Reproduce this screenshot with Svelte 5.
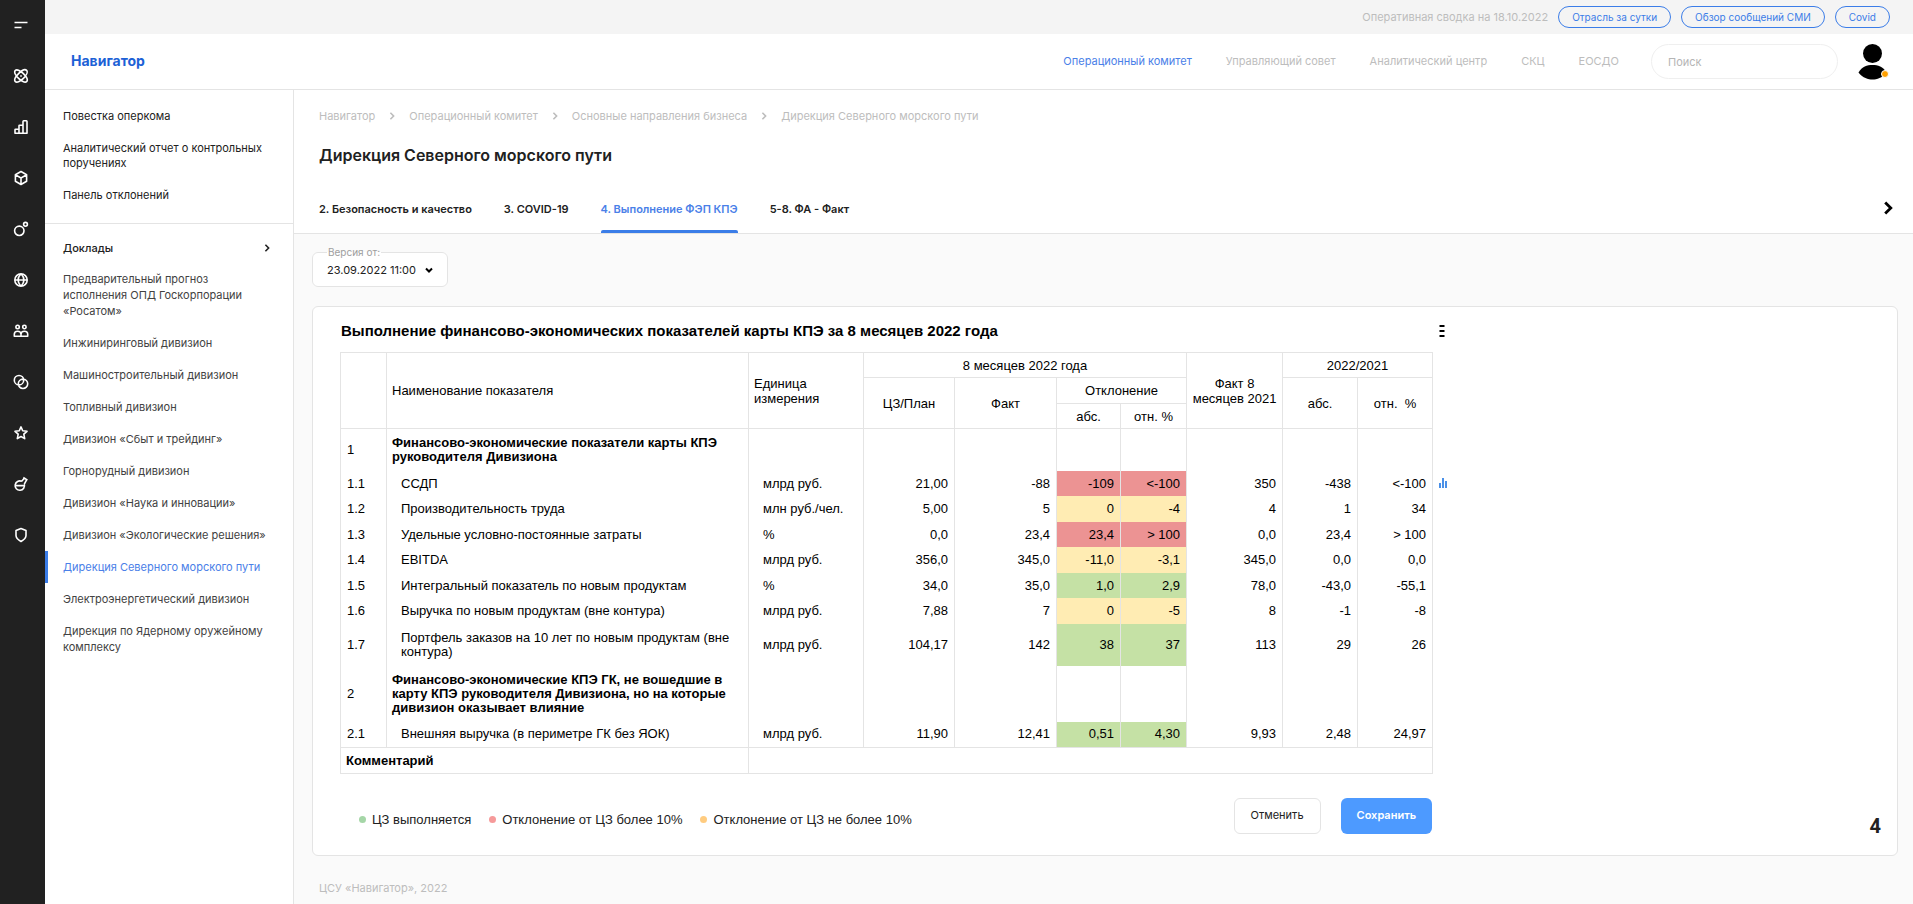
<script lang="ts">
	type Tone = 'good' | 'bad' | 'warn';
	type Row = {
		no: string;
		name: string;
		unit?: string;
		values?: string[];
		tone?: Tone;
		chart?: boolean;
	};

	const reports = [
		'Предварительный прогноз исполнения ОПД Госкорпорации «Росатом»',
		'Инжиниринговый дивизион',
		'Машиностроительный дивизион',
		'Топливный дивизион',
		'Дивизион «Сбыт и трейдинг»',
		'Горнорудный дивизион',
		'Дивизион «Наука и инновации»',
		'Дивизион «Экологические решения»',
		'Дирекция Северного морского пути',
		'Электроэнергетический дивизион',
		'Дирекция по Ядерному оружейному комплексу'
	];
	const pages = ['Повестка оперкома', 'Аналитический отчет о контрольных поручениях', 'Панель отклонений'];
	const sections = ['Операционный комитет', 'Управляющий совет', 'Аналитический центр', 'СКЦ', 'ЕОСДО'];
	const crumbs = ['Навигатор', 'Операционный комитет', 'Основные направления бизнеса', 'Дирекция Северного морского пути'];
	const tabs = ['2. Безопасность и качество', '3. COVID-19', '4. Выполнение ФЭП КПЭ', '5-8. ФА - Факт'];
	const digests = ['Отрасль за сутки', 'Обзор сообщений СМИ', 'Covid'];

	const rows: Row[] = [
		{ no: '1', name: 'Финансово-экономические показатели карты КПЭ руководителя Дивизиона' },
		{ no: '1.1', name: 'ССДП', unit: 'млрд руб.', values: ['21,00', '-88', '-109', '<-100', '350', '-438', '<-100'], tone: 'bad', chart: true },
		{ no: '1.2', name: 'Производительность труда', unit: 'млн руб./чел.', values: ['5,00', '5', '0', '-4', '4', '1', '34'], tone: 'warn' },
		{ no: '1.3', name: 'Удельные условно-постоянные затраты', unit: '%', values: ['0,0', '23,4', '23,4', '> 100', '0,0', '23,4', '> 100'], tone: 'bad' },
		{ no: '1.4', name: 'EBITDA', unit: 'млрд руб.', values: ['356,0', '345,0', '-11,0', '-3,1', '345,0', '0,0', '0,0'], tone: 'warn' },
		{ no: '1.5', name: 'Интегральный показатель по новым продуктам', unit: '%', values: ['34,0', '35,0', '1,0', '2,9', '78,0', '-43,0', '-55,1'], tone: 'good' },
		{ no: '1.6', name: 'Выручка по новым продуктам (вне контура)', unit: 'млрд руб.', values: ['7,88', '7', '0', '-5', '8', '-1', '-8'], tone: 'warn' },
		{ no: '1.7', name: 'Портфель заказов на 10 лет по новым продуктам (вне контура)', unit: 'млрд руб.', values: ['104,17', '142', '38', '37', '113', '29', '26'], tone: 'good' },
		{ no: '2', name: 'Финансово-экономические КПЭ ГК, не вошедшие в карту КПЭ руководителя Дивизиона, но на которые дивизион оказывает влияние' },
		{ no: '2.1', name: 'Внешняя выручка (в периметре ГК без ЯОК)', unit: 'млрд руб.', values: ['11,90', '12,41', '0,51', '4,30', '9,93', '2,48', '24,97'], tone: 'good' }
	];

	const legend: { tone: Tone; text: string }[] = [
		{ tone: 'good', text: 'ЦЗ выполняется' },
		{ tone: 'bad', text: 'Отклонение от ЦЗ более 10%' },
		{ tone: 'warn', text: 'Отклонение от ЦЗ не более 10%' }
	];

	const icons = [
		{ name: 'Меню', d: 'M1.5 5.5h13M1.5 10.5h7' },
		{
			name: 'Атом',
			d: 'M2.4 2.4C4 .8 7.800 3 10.400 5.600S15.200 12 13.600 13.600 8.200 13 5.600 10.400.8 4 2.400 2.400ZM13.600 2.400C12 .8 8.200 3 5.600 5.600S.8 12 2.400 13.600 7.800 13 10.400 10.400 15.200 4 13.600 2.400ZM8 7.200v1.600'
		},
		{ name: 'Показатели', d: 'M2 14.200v-3.400q0-.6.6-.6H6v4ZM6 14.200V6.800q0-.6.6-.6H10v8ZM10 14.200V2.400q0-.7.7-.7h2.600q.7 0 .7.7v11.800ZM2 14.200h12' },
		{ name: 'Продукты', d: 'M8 1.500l5.600 3.200v6.600L8 14.500l-5.600-3.200V4.700ZM2.600 4.900L8 8l5.400-3.100M8 8v6.300' },
		{ name: 'Процессы', d: 'M11 9.800a4.700 4.700 0 1 1-9.400 0 4.700 4.700 0 0 1 9.400 0ZM14.400 3.300a1.900 1.900 0 1 1-3.800 0 1.900 1.900 0 0 1 3.800 0Z' },
		{ name: 'География', d: 'M14.200 8A6.200 6.200 0 1 1 1.800 8a6.200 6.200 0 0 1 12.400 0ZM2 8h12M8 1.800c-3.800 4-3.800 8.400 0 12.400M8 1.800c3.800 4 3.800 8.400 0 12.400' },
		{
			name: 'Персонал',
			d: 'M6.300 4a1.700 1.700 0 1 1-3.400 0 1.700 1.700 0 0 1 3.400 0ZM13.100 4a1.700 1.700 0 1 1-3.400 0 1.700 1.700 0 0 1 3.400 0ZM1.300 13.300v-2q0-3 3.300-3T8 11.300v2ZM8 13.300v-2q0-3 3.400-3t3.300 3v2Z'
		},
		{ name: 'Связи', d: 'M10.700 6.200a4.700 4.700 0 1 1-9.400 0 4.700 4.700 0 0 1 9.400 0ZM14.700 9.800a4.700 4.700 0 1 1-9.400 0 4.700 4.700 0 0 1 9.400 0Z' },
		{ name: 'Избранное', d: 'M8 1.900l1.700 3.900 4.300.5-3.200 2.900.9 4.400L8 11.500l-3.700 2.100.9-4.400L2 6.300l4.300-.5Z' },
		{ name: 'Исследования', d: 'M8.700 5.300A4.700 4.700 0 1 0 11.300 8.200M8.700 5.300l2.600-3M11.300 8.200l2.300-4.400M10.300 1.500l4.200 2.700M2.200 9.600h9' },
		{ name: 'Безопасность', d: 'M8 1.500l5 2v5c0 2.800-2.400 4.500-5 6-2.600-1.500-5-3.200-5-6v-5Z' }
	];

	let activeSection = $state(0);
	let activeReport = $state(8);
	let activeTab = $state(2);
	let search = $state('');
</script>

{#snippet chevron(size: number, width: number)}
	<svg width={size} height={size} viewBox="0 0 10 10" fill="none" stroke="currentColor" stroke-width={width} aria-hidden="true">
		<path d="M3 1l4 4-4 4" />
	</svg>
{/snippet}

<div class="app">
	<nav class="rail" aria-label="Разделы">
		{#each icons as icon}
			<button aria-label={icon.name}>
				<svg width="16" height="16" viewBox="0 0 16 16"><path d={icon.d} /></svg>
			</button>
		{/each}
	</nav>

	<div class="page">
		<div class="digest">
			<span>Оперативная сводка на 18.10.2022</span>
			{#each digests as digest}
				<button class="pill">{digest}</button>
			{/each}
		</div>

		<header>
			<a class="brand" href="#home">Навигатор</a>
			<nav class="sections">
				{#each sections as section, i}
					<a href="#section-{i}" class:active={i === activeSection} onclick={() => (activeSection = i)}>{section}</a>
				{/each}
			</nav>
			<input type="search" placeholder="Поиск" aria-label="Поиск" bind:value={search} />
			<button class="avatar" aria-label="Профиль">
				<svg width="30" height="36" viewBox="0 0 30 36">
					<circle cx="14.500" cy="9.500" r="9.500" />
					<path d="M.5 28.500C4 22.500 9 21 14.500 21s10.500 1.500 14 7.500C24 34 19 35.500 14.500 35.500S5 34 .5 28.500Z" />
					<circle class="status" cx="27" cy="30" r="3.500" />
				</svg>
			</button>
		</header>

		<div class="body">
			<aside>
				<ul class="pages">
					{#each pages as page, i}
						<li><a href="#page-{i}">{page}</a></li>
					{/each}
				</ul>
				<button class="group">Доклады {@render chevron(8, 2)}</button>
				<ul class="reports">
					{#each reports as report, i}
						<li class:active={i === activeReport}>
							<a href="#report-{i}" onclick={() => (activeReport = i)}>{report}</a>
						</li>
					{/each}
				</ul>
			</aside>

			<main>
				<div class="top">
					<nav class="crumbs" aria-label="Навигация">
						{#each crumbs as crumb, i}
							{#if i > 0}{@render chevron(8, 2)}{/if}
							<a href="#crumb-{i}">{crumb}</a>
						{/each}
					</nav>
					<h1>Дирекция Северного морского пути</h1>
					<div class="tabs">
						{#each tabs as tab, i}
							<button class="tab" class:active={i === activeTab} onclick={() => (activeTab = i)}>{tab}</button>
						{/each}
						<button class="next" aria-label="Следующая вкладка" onclick={() => (activeTab = (activeTab + 1) % tabs.length)}>
							{@render chevron(14, 2)}
						</button>
					</div>
				</div>

				<div class="content">
					<fieldset class="version">
						<legend><label for="version">Версия от:</label></legend>
						<select id="version">
							<option>23.09.2022 11:00</option>
						</select>
						<svg width="8" height="8" viewBox="0 0 8 8" aria-hidden="true"><path d="M1 2.500l3 3 3-3" /></svg>
					</fieldset>

					<section class="card">
						<div class="report">
							<div class="title">
								<h2>Выполнение финансово-экономических показателей карты КПЭ за 8 месяцев 2022 года</h2>
								<button aria-label="Действия">
									<svg width="6" height="14" viewBox="0 0 6 14"><path d="M.5 1h5v2h-5zM.5 6h5v2h-5zM.5 11h5v2h-5z" /></svg>
								</button>
							</div>

							<table>
								<colgroup>
									<col class="c-no" /><col class="c-name" /><col class="c-unit" /><col class="c-plan" /><col class="c-fact" />
									<col class="c-abs" /><col class="c-rel" /><col class="c-prev" /><col class="c-diff" /><col class="c-diff" /><col class="c-tool" />
								</colgroup>
								<thead>
									<tr>
										<th rowspan="3"></th>
										<th rowspan="3" class="left">Наименование показателя</th>
										<th rowspan="3" class="left">Единица измерения</th>
										<th colspan="4">8 месяцев 2022 года</th>
										<th rowspan="3">Факт 8 месяцев 2021</th>
										<th colspan="2">2022/2021</th>
										<td class="tool"></td>
									</tr>
									<tr>
										<th rowspan="2">ЦЗ/План</th>
										<th rowspan="2">Факт</th>
										<th colspan="2" class="tall">Отклонение</th>
										<th rowspan="2">абс.</th>
										<th rowspan="2">отн. &nbsp;%</th>
										<td class="tool"></td>
									</tr>
									<tr>
										<th>абс.</th>
										<th>отн. %</th>
										<td class="tool"></td>
									</tr>
								</thead>
								<tbody>
									{#each rows as row}
										<tr class:total={!row.values}>
											<td>{row.no}</td>
											<td class="name">{row.name}</td>
											<td class="unit">{row.unit ?? ''}</td>
											{#each row.values ?? Array(7).fill('') as value, i}
												<td class="num {i === 2 || i === 3 ? (row.tone ?? '') : ''}">{value}</td>
											{/each}
											<td class="tool">
												{#if row.chart}
													<button aria-label="График: {row.name}">
														<svg width="8" height="10" viewBox="0 0 8 10"><path d="M0 5h2v5H0zM3 0h2v10H3zM6 3h2v7H6z" /></svg>
													</button>
												{/if}
											</td>
										</tr>
									{/each}
								</tbody>
								<tfoot>
									<tr>
										<th colspan="2" class="left tall">Комментарий</th>
										<td colspan="8"></td>
										<td class="tool"></td>
									</tr>
								</tfoot>
							</table>

							<div class="bottom">
								<ul class="legend">
									{#each legend as item}
										<li><i class={item.tone}></i>{item.text}</li>
									{/each}
								</ul>
								<button class="cancel">Отменить</button>
								<button class="save">Сохранить</button>
							</div>
						</div>
						<span class="page-no">4</span>
					</section>

					<footer>ЦСУ «Навигатор», 2022</footer>
				</div>
			</main>
		</div>
	</div>
</div>

<style>
	:global(body) {
		margin: 0;
	}

	.app {
		display: flex;
		min-height: 100vh;
		font: 12px/16px Inter, sans-serif;
		color: #212121;
		background: #fff;
	}

	a {
		color: inherit;
		text-decoration: none;
	}

	button {
		font: inherit;
		color: inherit;
		padding: 0;
		border: none;
		background: none;
		cursor: pointer;
	}

	ul {
		list-style: none;
		margin: 0;
		padding: 0;
	}

	svg {
		display: block;
	}

	.rail {
		flex: none;
		width: 45px;
		box-sizing: border-box;
		padding: 17px 0 0 13px;
		display: flex;
		flex-direction: column;
		align-items: flex-start;
		gap: 35px;
		background: #212121;
	}

	.rail path {
		fill: none;
		stroke: #fff;
		stroke-width: 1.6;
		stroke-linejoin: round;
	}

	.page {
		flex: 1;
		min-width: 0;
		display: flex;
		flex-direction: column;
	}

	.digest {
		display: flex;
		justify-content: flex-end;
		align-items: center;
		gap: 10px;
		height: 34px;
		padding-right: 23px;
		background: #f4f4f4;
		color: #bdbdbd;
		font-size: 11px;
	}

	.pill {
		height: 22px;
		padding: 0 13px;
		border: 1px solid #3b7de8;
		border-radius: 11px;
		color: #3b7de8;
		font-size: 10px;
	}

	header {
		display: flex;
		align-items: center;
		height: 55px;
		padding: 0 25px 0 26px;
		border-bottom: 1px solid #e4e4e4;
	}

	.brand {
		margin-right: auto;
		padding-bottom: 2px;
		font-size: 14px;
		font-weight: 700;
		color: #1c61d6;
	}

	.sections {
		display: flex;
		gap: 34px;
		margin-right: 32px;
		padding-bottom: 2px;
		color: #bdbdbd;
		font-size: 11px;
	}

	.sections .active {
		color: #4a80e8;
	}

	input {
		width: 187px;
		height: 35px;
		box-sizing: border-box;
		padding: 0 16px;
		border: 1px solid #efefef;
		border-radius: 18px;
		font: 11px Inter, sans-serif;
		outline: none;
	}

	input::placeholder {
		color: #b5b5b5;
	}

	.avatar {
		margin-left: 20px;
	}

	.avatar svg {
		overflow: visible;
	}

	.status {
		fill: #ffa000;
		stroke: #fff;
	}

	.body {
		flex: 1;
		display: flex;
	}

	aside {
		flex: none;
		width: 249px;
		box-sizing: border-box;
		border-right: 1px solid #e4e4e4;
		font-size: 11px;
	}

	.pages {
		display: flex;
		flex-direction: column;
		gap: 17px;
		padding: 19px 18px 20px;
		line-height: 15px;
		border-bottom: 1px solid #e4e4e4;
	}

	.group {
		display: flex;
		justify-content: space-between;
		align-items: center;
		width: 100%;
		padding: 16px 22px 7px 18px;
		font-weight: 500;
	}

	.reports li {
		padding: 8px 18px 8px 15px;
		color: #424242;
		border-left: 3px solid transparent;
	}

	.reports .active {
		color: #4a80e8;
		border-left-color: #3b7de8;
	}

	main {
		flex: 1;
		min-width: 0;
		display: flex;
		flex-direction: column;
	}

	.top {
		padding: 18px 18px 0 25px;
		border-bottom: 1px solid #e4e4e4;
	}

	.crumbs {
		display: flex;
		align-items: center;
		gap: 13px;
		color: #bdbdbd;
		font-size: 11px;
	}

	h1 {
		margin: 19px 0 34px;
		font-size: 16px;
		line-height: 24px;
		font-weight: 600;
	}

	.tabs {
		display: flex;
		align-items: flex-start;
		gap: 32px;
		font-size: 11px;
		font-weight: 600;
	}

	.tab {
		position: relative;
		height: 32px;
		padding-bottom: 16px;
	}

	.tab.active {
		color: #4a80e8;
	}

	.tab.active::after {
		content: '';
		position: absolute;
		inset: auto 0 0;
		height: 3px;
		border-radius: 2px 2px 0 0;
		background: #3b7de8;
	}

	.next {
		margin-left: auto;
		color: #000;
	}

	.content {
		flex: 1;
		padding: 10px 15px 0 18px;
		background: #fafafa;
	}

	.version {
		display: flex;
		align-items: center;
		gap: 6px;
		width: fit-content;
		height: 43px;
		box-sizing: border-box;
		margin: 0 0 19px;
		padding: 0 14px 6px;
		border: 1px solid #e4e4e4;
		border-radius: 6px;
		background: #fff;
	}

	.version legend {
		padding: 0 1px;
		color: #9e9e9e;
		font-size: 10px;
		line-height: 16px;
	}

	.version select {
		appearance: none;
		width: 92px;
		padding: 0;
		border: none;
		background: none;
		color: #212121;
		font: 11px Inter, sans-serif;
	}

	.version path {
		fill: none;
		stroke: #000;
		stroke-width: 2;
	}

	.card {
		display: flex;
		justify-content: space-between;
		align-items: flex-end;
		padding: 14px 16px 21px 27px;
		background: #fff;
		border: 1px solid #e4e4e4;
		border-radius: 6px;
		color: #000;
		font-family: 'Liberation Sans', Arial, sans-serif;
	}

	.report {
		flex: 0 1 1115px;
	}

	.title {
		display: flex;
		justify-content: space-between;
		align-items: center;
		margin-bottom: 11px;
		padding: 0 10px 0 1px;
	}

	h2 {
		margin: 0;
		font-size: 15px;
		line-height: 20px;
		font-weight: 700;
	}

	table {
		width: 100%;
		table-layout: fixed;
		border-collapse: collapse;
		font-size: 13px;
		line-height: 15px;
	}

	.c-no { width: 46px; }
	.c-name { width: 362px; }
	.c-unit { width: 115px; }
	.c-plan { width: 91px; }
	.c-fact { width: 102px; }
	.c-abs { width: 64px; }
	.c-rel { width: 66px; }
	.c-prev { width: 96px; }
	.c-diff { width: 75px; }
	.c-tool { width: 22px; }

	th,
	td {
		height: 25px;
		box-sizing: border-box;
		padding: 0 5px;
		border: 1px solid #e4e4e4;
	}

	th {
		font-weight: 400;
	}

	.left {
		text-align: left;
	}

	.tall {
		height: 26px;
	}

	tbody {
		line-height: 14px;
	}

	tbody td {
		height: 26px;
		padding: 0 6px;
		border-width: 0 1px;
	}

	tbody tr:nth-child(even) td {
		height: 25px;
	}

	tbody .name {
		padding: 5px 14px;
	}

	/* rows whose name wraps */
	tbody tr:nth-child(8) .name {
		padding: 7px 14px;
	}

	tbody .unit {
		padding: 0 14px;
	}

	tbody .total .name {
		padding: 7px 16px 7px 5px;
		font-weight: 700;
	}

	.num {
		text-align: right;
	}

	tfoot .left {
		font-weight: 700;
	}

	table .tool {
		border: none;
		padding: 0 0 0 6px;
	}

	.tool path {
		fill: #4a90e8;
	}

	td.good { background: #c5e1a5; }
	td.bad { background: #ec9393; }
	td.warn { background: #ffecb3; }

	.bottom {
		display: flex;
		align-items: center;
		gap: 20px;
		margin-top: 24px;
		padding-right: 23px;
		font: 11px Inter, sans-serif;
	}

	.legend {
		display: flex;
		gap: 18px;
		margin-right: auto;
		padding: 8px 0 0 19px;
		color: #212121;
		font: 13px 'Liberation Sans', Arial, sans-serif;
	}

	.legend li {
		display: flex;
		align-items: center;
		gap: 6px;
	}

	.legend i {
		width: 7px;
		height: 7px;
		border-radius: 50%;
	}

	i.good { background: #a5d6a7; }
	i.bad { background: #f69a9a; }
	i.warn { background: #ffcc80; }

	.cancel,
	.save {
		height: 36px;
		padding: 0 16px 2px;
		border-radius: 6px;
	}

	.cancel {
		border: 1px solid #e4e4e4;
		color: #212121;
	}

	.save {
		background: #4d9aff;
		color: #fff;
		font-weight: 600;
	}

	.page-no {
		color: #212121;
		font: 700 20px/16px Roboto, sans-serif;
	}

	footer {
		padding: 24px 7px 8px;
		color: #bdbdbd;
		font-size: 11px;
	}
</style>
